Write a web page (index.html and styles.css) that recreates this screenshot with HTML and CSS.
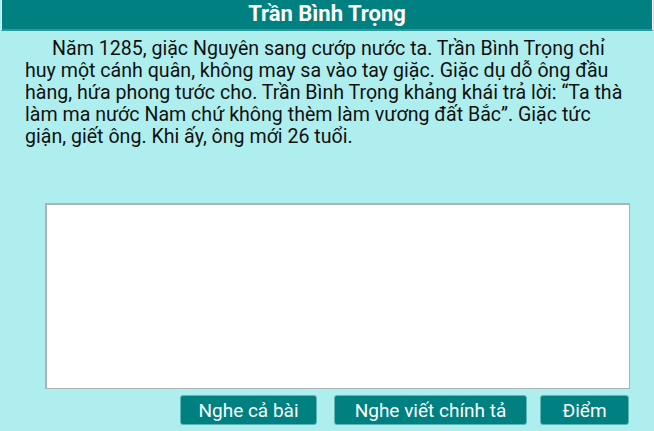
FILE: index.html
```html
<!DOCTYPE html>
<html lang="vi">
<head>
    <meta charset="UTF-8">
    <meta name="viewport" content="width=device-width, initial-scale=1.0">
    <title>Trần Bình Trọng</title>
    <link rel="stylesheet" href="styles.css">
</head>
<body>
    <h1 class="title">Trần Bình Trọng</h1>
    <p class="story">Năm 1285, giặc Nguyên sang cướp nước ta. Trần Bình Trọng chỉ huy một cánh quân, không may sa vào tay giặc. Giặc dụ dỗ ông đầu hàng, hứa phong tước cho. Trần Bình Trọng khảng khái trả lời: “Ta thà làm ma nước Nam chứ không thèm làm vương đất Bắc”. Giặc tức giận, giết ông. Khi ấy, ông mới 26 tuổi.</p>
    <textarea class="answer" id="answer"></textarea>
    <div class="buttons">
        <button class="btn-listen">Nghe cả bài</button>
        <button class="btn-dictate">Nghe viết chính tả</button>
        <button class="btn-score">Điểm</button>
    </div>
</body>
</html>
```

FILE: styles.css
```css
body {
    font-family: Roboto, "Liberation Sans", sans-serif;
    background-color: #afeeee;
    margin: 0;
    width: 654px;
    height: 431px;
    overflow: hidden;
}
.title {
    margin: 0 1px;
    height: 29px;
    line-height: 28px;
    background-color: #008080;
    color: #fff;
    font-size: 22px;
    font-weight: bold;
    text-align: center;
    border-left: 1px solid #fff;
    border-right: 1px solid #fff;
    border-bottom: 2px solid #2a9a9a;
}
.story {
    margin: 7px 26px 0 25px;
    font-size: 19.6px;
    line-height: 22px;
    text-indent: 27px;
    color: #111;
}
.answer {
    display: block;
    box-sizing: border-box;
    width: 585px;
    height: 186px;
    margin: 55px 0 0 45px;
    border: 2px solid #a9b4b4;
    border-right-width: 1px;
    border-bottom-width: 1px;
    background: #fff;
    resize: none;
}
.buttons {
    display: flex;
    justify-content: flex-end;
    gap: 13px;
    padding-right: 25px;
    margin-top: 6px;
}
.buttons button {
    height: 30px;
    padding: 0;
    background-color: #008080;
    color: #fff;
    font-family: Roboto, "Liberation Sans", sans-serif;
    font-size: 19px;
    border: 1px solid #5fb5b5;
    border-radius: 3px;
    cursor: pointer;
}
.btn-listen {
    width: 137px;
    margin-right: 4px;
}
.btn-dictate {
    width: 193px;
}
.btn-score {
    width: 89px;
}
```
